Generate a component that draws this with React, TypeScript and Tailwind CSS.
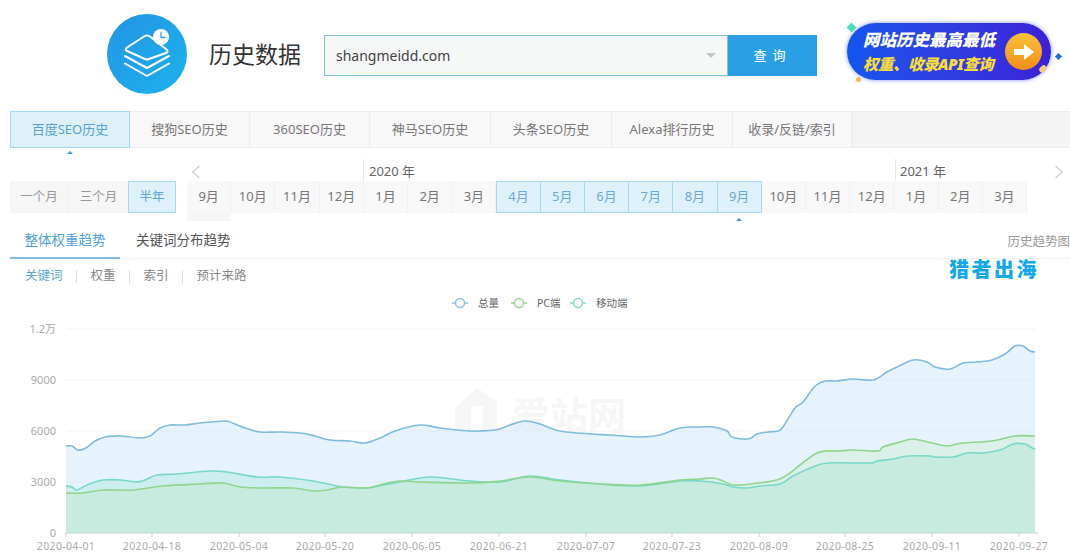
const FONT = "font-['Noto_Sans','Noto_Sans_CJK_SC',sans-serif]";

const seoTabs = [
  { label: "百度SEO历史", width: "w-[120px]", active: true },
  { label: "搜狗SEO历史", width: "w-[120px]", active: false },
  { label: "360SEO历史", width: "w-[120px]", active: false },
  { label: "神马SEO历史", width: "w-[121px]", active: false },
  { label: "头条SEO历史", width: "w-[121px]", active: false },
  { label: "Alexa排行历史", width: "w-[121px]", active: false },
  { label: "收录/反链/索引", width: "w-[119px]", active: false },
];

const months = ["9月", "10月", "11月", "12月", "1月", "2月", "3月", "4月", "5月", "6月", "7月", "8月", "9月", "10月", "11月", "12月", "1月", "2月", "3月"];

type Pt = [number, number];

const total: Pt[] = [
  [66, 446], [72, 446], [78, 450], [86, 448], [95, 441], [105, 437], [115, 436], [122, 436], [140, 438], [150, 436],
  [160, 428], [170, 425], [185, 425], [200, 423], [225, 421], [235, 424], [245, 428], [260, 432], [280, 432], [300, 433],
  [315, 436], [330, 440], [350, 441], [365, 443], [380, 438], [395, 431], [420, 425], [440, 428], [470, 431], [495, 430],
  [510, 425], [525, 421], [540, 424], [560, 431], [590, 434], [610, 435], [640, 437], [660, 435], [680, 428], [700, 427],
  [713, 427], [727, 431], [732, 437], [748, 439], [757, 434], [768, 432], [778, 431], [783, 427], [795, 408], [803, 402],
  [815, 386], [825, 381], [837, 381], [853, 379], [873, 380], [887, 372], [897, 367], [913, 360], [927, 362], [935, 367],
  [950, 369], [963, 363], [977, 362], [992, 360], [1005, 354], [1015, 346], [1023, 346], [1030, 351], [1035, 352],
];

const pc: Pt[] = [
  [66, 493], [83, 493], [103, 490], [133, 490], [163, 486], [200, 484], [223, 483], [240, 487], [263, 488], [293, 488],
  [313, 491], [327, 490], [343, 487], [367, 488], [383, 484], [400, 481], [420, 482], [470, 483], [500, 481], [530, 477],
  [560, 481], [600, 484], [640, 485], [680, 480], [700, 479], [713, 478], [723, 481], [733, 485], [750, 484], [777, 480],
  [790, 473], [800, 465], [815, 454], [825, 451], [837, 451], [853, 450], [878, 451], [883, 447], [900, 442], [913, 439],
  [932, 443], [947, 446], [962, 443], [992, 441], [1015, 436], [1035, 436],
];

const mobile: Pt[] = [
  [66, 486], [72, 487], [77, 490], [87, 485], [103, 480], [120, 480], [137, 482], [145, 480], [157, 475], [177, 474],
  [210, 471], [227, 472], [257, 477], [280, 477], [313, 481], [343, 487], [367, 488], [383, 485], [400, 482], [430, 477],
  [470, 481], [500, 482], [530, 476], [560, 480], [600, 484], [640, 486], [680, 481], [700, 481], [723, 484], [733, 487],
  [747, 488], [760, 486], [780, 484], [793, 476], [813, 467], [828, 463], [870, 463], [877, 461], [893, 459], [908, 456],
  [930, 456], [935, 457], [953, 457], [967, 453], [983, 453], [1000, 450], [1013, 444], [1025, 444], [1032, 448], [1035, 449],
];

// catmull-rom through the sampled points, page y shifted to the svg top
const CHART_TOP = 290;
const CHART_BASE = 533 - CHART_TOP;

function smooth(points: Pt[]) {
  const p = points.map(([x, y]) => [x, y - CHART_TOP] as Pt);
  let d = `M${p[0][0]} ${p[0][1]}`;
  for (let i = 0; i < p.length - 1; i++) {
    const a = p[Math.max(i - 1, 0)];
    const b = p[i];
    const c = p[i + 1];
    const e = p[Math.min(i + 2, p.length - 1)];
    d += `C${b[0] + (c[0] - a[0]) / 6} ${b[1] + (c[1] - a[1]) / 6} ${c[0] - (e[0] - b[0]) / 6} ${c[1] - (e[1] - b[1]) / 6} ${c[0]} ${c[1]}`;
  }
  return d;
}

const area = (points: Pt[]) => `${smooth(points)}L1035 ${CHART_BASE}L66 ${CHART_BASE}Z`;

const yTicks = [
  { label: "1.2万", y: 329 },
  { label: "9000", y: 380 },
  { label: "6000", y: 431 },
  { label: "3000", y: 482 },
  { label: "0", y: 533 },
];

const xTicks = [
  { label: "2020-04-01", x: 66 },
  { label: "2020-04-18", x: 152 },
  { label: "2020-05-04", x: 239 },
  { label: "2020-05-20", x: 325 },
  { label: "2020-06-05", x: 412 },
  { label: "2020-06-21", x: 499 },
  { label: "2020-07-07", x: 586 },
  { label: "2020-07-23", x: 672 },
  { label: "2020-08-09", x: 759 },
  { label: "2020-08-25", x: 845 },
  { label: "2020-09-11", x: 932 },
  { label: "2020-09-27", x: 1019 },
];

const legend = [
  { label: "总量", x: 460, color: "#8cc3e0" },
  { label: "PC端", x: 519, color: "#93d88c" },
  { label: "移动端", x: 578, color: "#7fdcc8" },
];

function LayersLogo() {
  return (
    <div className="flex h-20 w-20 items-center justify-center rounded-full bg-gradient-to-br from-[#2394e4] to-[#1cb2ee]">
      <svg viewBox="0 0 80 80" className="h-20 w-20" fill="none" stroke="#fff" strokeLinejoin="round" strokeLinecap="round" strokeWidth="2">
        <path d="M18 49.5L40 62L62 49.5" />
        <path d="M18 42L40 54L62 42" />
        <path d="M20 33.5L37 22.5Q40 20.5 43 22.5L59 35Q62 37.5 59 39L42 45Q40 46 38 45L20 37Q17.5 35.5 20 33.5Z" />
        <circle cx="54" cy="23" r="8" fill="#fff" stroke="none" />
        <path d="M54 18.5v5h4" stroke="#2b9fe8" strokeWidth="1.3" />
      </svg>
    </div>
  );
}

function ApiBanner() {
  return (
    <div className="relative ml-[30px] mt-[-1px] h-[60px] w-[208px]">
      <div className="flex h-[57px] w-[204px] items-center justify-between rounded-full bg-gradient-to-r from-[#1254ee] to-[#3b20d8] pl-[16px] pr-[9px] shadow-[0_0_4px_#7f8cff]">
        <div className="flex flex-col items-start leading-[25px] font-black italic">
          <span className="text-[16.5px] text-white">网站历史最高最低</span>
          <span className="text-[15.5px] tracking-[-0.5px] text-[#f7dc3c]">权重、收录API查询</span>
        </div>
        <div className="flex h-[37px] w-[37px] items-center justify-center rounded-full bg-gradient-to-b from-[#f8c13a] to-[#f08f12]">
          <svg viewBox="0 0 24 24" className="h-[24px] w-[24px]" fill="#fff">
            <path d="M2 9h10V4l10 8-10 8v-5H2z" />
          </svg>
        </div>
      </div>
      <span className="absolute left-[1px] top-[1px] h-[7px] w-[7px] rotate-45 bg-[#4fdcc0]" />
      <span className="absolute left-[209px] top-[31px] h-[5px] w-[5px] rotate-45 bg-[#1f6fe0]" />
      <span className="absolute left-[9px] top-[54px] h-[5px] w-[5px] rounded-full bg-[#f4b45e]" />
      <span className="absolute left-[192px] top-[43px] h-[6px] w-[8px] -rotate-45 rounded-full bg-[#f7cb7e]" />
    </div>
  );
}

function Header() {
  return (
    <div className="flex h-[111px] items-start">
      <div className="ml-[107px] mt-[14px]">
        <LayersLogo />
      </div>
      <h1 className="ml-[22px] mt-[37px] w-[92px] text-[23px] leading-[34px] font-normal whitespace-nowrap text-[#333]">历史数据</h1>
      <div className="ml-[23px] mt-[35px] flex h-[41px] w-[493px]">
        <div className="flex w-[404px] items-center justify-between border border-[#86c0e0] bg-[#f6f7f7] pl-[11px] pr-[11px] text-[14px] text-[#444]">
          <span>shangmeidd.com</span>
          <span className="h-0 w-0 border-x-[5px] border-t-[5px] border-x-transparent border-t-[#c4c7ca]" />
        </div>
        <button type="button" className="w-[89px] bg-[#2b9fe3] text-[13px] tracking-[6px] text-white">
          查询
        </button>
      </div>
      <div className="mt-[24px]">
        <ApiBanner />
      </div>
    </div>
  );
}

function SeoTabs() {
  return (
    <div className="ml-[10px] flex h-[37px] border-y border-[#eee] bg-[#f3f3f3]">
      {seoTabs.map((tab) => (
        <div
          key={tab.label}
          className={`flex ${tab.width} items-center justify-center text-[13px] ${
            tab.active
              ? "my-[-1px] border border-[#a6d8ef] bg-[#def1fb] text-[#55a3d3]"
              : "border-r border-[#ececec] bg-[#f8f8f8] text-[#777]"
          }`}
        >
          {tab.label}
        </div>
      ))}
    </div>
  );
}

function MonthPicker() {
  return (
    <div className="relative h-[74px]">
      <span className="absolute left-[67px] top-[3px] h-0 w-0 border-x-[3px] border-b-[3px] border-x-transparent border-b-[#4a9bd0]" />
      <div className="absolute left-[363px] top-[11px] h-[22px] border-l border-[#e8e8e8] pl-[5px] text-[13px] leading-[24px] text-[#666]">2020 年</div>
      <div className="absolute left-[895px] top-[11px] h-[22px] border-l border-[#e8e8e8] pl-[4px] text-[13px] leading-[24px] text-[#666]">2021 年</div>
      <svg viewBox="0 0 10 14" className="absolute left-[191px] top-[17px] h-[14px] w-[10px]" fill="none" stroke="#cfcfcf" strokeWidth="1.2">
        <path d="M8.5 1L1.5 7L8.5 13" />
      </svg>
      <svg viewBox="0 0 10 14" className="absolute left-[1054px] top-[17px] h-[14px] w-[10px]" fill="none" stroke="#cfcfcf" strokeWidth="1.2">
        <path d="M1.5 1L8.5 7L1.5 13" />
      </svg>

      <div className="flex pl-[10px] pt-[33px]">
        <div className="flex h-[32px] w-[166px] text-[12.5px]">
          <div className="flex w-[59px] items-center justify-center border-r border-[#eee] bg-[#f6f6f6] text-[#999]">一个月</div>
          <div className="flex w-[59px] items-center justify-center bg-[#f6f6f6] text-[#999]">三个月</div>
          <div className="flex w-[48px] items-center justify-center border border-[#a6d8ef] bg-[#def1fb] text-[#5aa8d8]">半年</div>
        </div>
        <div className="ml-[11px] grid h-[32px] w-[840px] grid-cols-[repeat(19,minmax(0,1fr))] text-[13px]">
          {months.map((month, i) => {
            const selected = i >= 7 && i <= 12;
            return (
              <div
                key={i}
                className={`flex items-center justify-center ${
                  selected
                    ? `${i === 7 ? "border" : "border-y border-r"} border-[#a6d8ef] bg-[#def1fb] text-[#6aa9d4]`
                    : "border-r border-[#f0f0f0] bg-[#f8f8f8] text-[#777]"
                }`}
              >
                {month}
              </div>
            );
          })}
        </div>
      </div>
      <div className="ml-[187px] h-[8px] w-[44px] bg-[#f6f6f6]" />
      <span className="absolute left-[736px] top-[70px] h-0 w-0 border-x-[3px] border-b-[3px] border-x-transparent border-b-[#4a9bd0]" />
    </div>
  );
}

function TrendTabs() {
  return (
    <div className="ml-[10px] mt-[-2px] flex h-[39px] items-stretch justify-between border-b border-[#f2f2f2] text-[13.5px]">
      <div className="flex">
        <div className="flex h-[39px] w-[110px] items-center justify-center border-b-2 border-[#7fbde2] pt-[3px] text-[#4f9fd6]">整体权重趋势</div>
        <div className="ml-[16px] flex items-center pt-[3px] text-[#555]">关键词分布趋势</div>
      </div>
      <div className="flex items-center pt-[6px] text-[12.5px] text-[#999]">历史趋势图</div>
    </div>
  );
}

function SubLinks() {
  const items = ["权重", "索引", "预计来路"];
  return (
    <div className="flex h-[31px] items-center pl-[25px] pt-[3px] text-[12.5px] text-[#888]">
      <span className="text-[#5ba6d8]">关键词</span>
      {items.map((item) => (
        <span key={item} className="flex items-center">
          <span className="mx-[13.5px] h-[13px] border-l border-[#ddd]" />
          {item}
        </span>
      ))}
    </div>
  );
}

function Chart() {
  return (
    <svg viewBox="0 0 1070 269" className="block h-[269px] w-[1070px]">
      {legend.map((item) => (
        <g key={item.label} stroke={item.color} fill="none">
          <path d={`M${item.x - 8} 13H${item.x + 8}`} strokeWidth="1.5" />
          <circle cx={item.x} cy="13" r="4.5" fill="#fff" strokeWidth="1.5" />
          <text x={item.x + 18} y="17" fontSize="10.5" fill="#666" stroke="none">{item.label}</text>
        </g>
      ))}

      {yTicks.map((tick) => (
        <g key={tick.label}>
          {tick.y !== 533 && <path d={`M66 ${tick.y - CHART_TOP}H1036`} stroke="#f3f3f3" />}
          <text x="56" y={tick.y - CHART_TOP + 4} textAnchor="end" fontSize="11" fill="#aaa">{tick.label}</text>
        </g>
      ))}

      <text x="512" y="139" fontSize="38" fill="#f6f6f6" fontWeight="700">爱站网</text>
      <path d="M455 118l22-20 20 14v28h-14v-24h-12v24h-16z" fill="#f6f6f6" />

      <path d={area(total)} fill="#cfe8f9" fillOpacity="0.5" />
      <path d={area(mobile)} fill="#a8e6dc" fillOpacity="0.4" />
      <path d={area(pc)} fill="#b0e6a8" fillOpacity="0.22" />

      <path d={smooth(total)} fill="none" stroke="#7fbcdc" strokeWidth="1.6" />
      <path d={smooth(mobile)} fill="none" stroke="#78d8c8" strokeWidth="1.6" />
      <path d={smooth(pc)} fill="none" stroke="#8fd58c" strokeWidth="1.6" />

      <path d={`M66 ${CHART_BASE}H1038`} stroke="#c6d2ce" />
      {xTicks.map((tick) => (
        <g key={tick.label}>
          <path d={`M${tick.x} ${CHART_BASE}v4`} stroke="#c6d2ce" />
          <text x={tick.x} y={CHART_BASE + 17} textAnchor="middle" fontSize="10.5" letterSpacing="0.35" fill="#aaa">{tick.label}</text>
        </g>
      ))}
    </svg>
  );
}

export default function App() {
  return (
    <div className={`relative h-[559px] w-[1070px] overflow-hidden bg-white ${FONT}`}>
      <Header />
      <SeoTabs />
      <MonthPicker />
      <TrendTabs />
      <SubLinks />
      <Chart />
      <div className="absolute left-[949px] top-[258px] text-[20px] leading-[24px] font-black tracking-[2.5px] text-[#12a8ea]">猎者出海</div>
    </div>
  );
}
